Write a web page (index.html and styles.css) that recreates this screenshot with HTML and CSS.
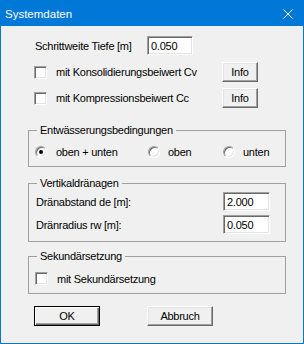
FILE: index.html
```html
<!DOCTYPE html>
<html lang="de">
<head>
    <meta charset="UTF-8">
    <title>Systemdaten</title>
    <link rel="stylesheet" href="styles.css">
</head>
<body>
    <div class="window">
        <div class="titlebar">
            <span class="title">Systemdaten</span>
            <svg class="close" width="10" height="10" viewBox="0 0 10 10">
                <path d="M0.5 0.5L9.5 9.5M9.5 0.5L0.5 9.5" stroke="#ffffff" stroke-width="1" fill="none"/>
            </svg>
        </div>

        <div class="content">
            <div class="row step-row">
                <label class="step-label">Schrittweite Tiefe [m]</label>
                <input class="field step-field" type="text" value="0.050">
            </div>

            <div class="row check-row first">
                <label class="check"><input type="checkbox"><span>mit Konsolidierungsbeiwert Cv</span></label>
                <button class="btn info">Info</button>
            </div>
            <div class="row check-row">
                <label class="check"><input type="checkbox"><span>mit Kompressionsbeiwert Cc</span></label>
                <button class="btn info">Info</button>
            </div>

            <fieldset class="group drainage">
                <legend>Entwässerungsbedingungen</legend>
                <div class="radio-row">
                    <label class="radio wide"><input type="radio" name="drain" checked><span>oben + unten</span></label>
                    <label class="radio mid"><input type="radio" name="drain"><span>oben</span></label>
                    <label class="radio"><input type="radio" name="drain"><span>unten</span></label>
                </div>
            </fieldset>

            <fieldset class="group vertical">
                <legend>Vertikaldränagen</legend>
                <div class="value-row">
                    <label>Dränabstand de [m]:</label>
                    <input class="field value-field" type="text" value="2.000">
                </div>
                <div class="value-row second">
                    <label>Dränradius rw [m]:</label>
                    <input class="field value-field" type="text" value="0.050">
                </div>
            </fieldset>

            <fieldset class="group secondary">
                <legend>Sekundärsetzung</legend>
                <label class="check"><input type="checkbox"><span>mit Sekundärsetzung</span></label>
            </fieldset>

            <div class="actions">
                <button class="btn action default">OK</button>
                <button class="btn action">Abbruch</button>
            </div>
        </div>
    </div>
</body>
</html>
```

FILE: styles.css
```css
/* Reset */
* {
    margin: 0;
    padding: 0;
    box-sizing: border-box;
}

body {
    font-family: 'Liberation Sans', Arial, sans-serif;
    font-size: 11px;
    color: #000000;
    background-color: #f0f0f0;
}

.window {
    width: 304px;
    height: 344px;
    border: 1px solid #0078d7; /* Window frame */
    background-color: #f0f0f0;
}

.titlebar {
    height: 25px;
    background-color: #0078d7;
    color: #ffffff;
    display: flex;
    align-items: center;
    justify-content: space-between;
    padding-left: 4px;
    padding-right: 10px;
}

.title {
    font-size: 11.5px;
    line-height: 14px;
    padding-top: 1px;
}

.close {
    display: block;
    margin-top: 1px;
}

.content {
    padding: 10px 17px 0 27px;
    letter-spacing: -0.25px; /* narrower dialog font */
}

.row {
    display: flex;
    align-items: center;
    padding-left: 6px;
}

.step-row {
    height: 19px;
}

.step-label {
    width: 113px;
    padding-left: 1px;
}

/* Sunken edit boxes */
.field {
    font-family: 'Liberation Sans', Arial, sans-serif;
    font-size: 11px;
    letter-spacing: -0.25px;
    color: #000000;
    height: 19px;
    padding: 0 3px;
    background-color: #ffffff;
    border: 1px solid;
    border-color: #a0a0a0 #ffffff #ffffff #a0a0a0;
    box-shadow: inset 1px 1px #696969, inset -1px -1px #e3e3e3;
    outline: none;
}

.step-field {
    width: 46px;
}

.check-row {
    height: 20px;
    margin-top: 6px;
    justify-content: space-between;
    padding-right: 28px;
}

.check-row.first {
    margin-top: 7px;
}

.check,
.radio {
    display: flex;
    align-items: center;
    height: 13px;
}

.check input,
.radio input {
    appearance: none;
    -webkit-appearance: none;
    width: 13px;
    height: 13px;
    margin-right: 9px;
    background-color: #ffffff;
    border: 1px solid;
    border-color: #a0a0a0 #ffffff #ffffff #a0a0a0;
    box-shadow: inset 1px 1px #696969, inset -1px -1px #e3e3e3;
    flex-shrink: 0;
}

.radio input {
    width: 12px;
    height: 12px;
    border-radius: 50%;
    margin-right: 9px;
    position: relative;
}

.radio input:checked::after {
    content: '';
    position: absolute;
    left: 3px;
    top: 3px;
    width: 4px;
    height: 4px;
    border-radius: 50%;
    background-color: #000000;
}

/* Raised push buttons */
.btn {
    font-family: 'Liberation Sans', Arial, sans-serif;
    font-size: 11px;
    letter-spacing: -0.25px;
    color: #000000;
    height: 20px;
    background-color: #f0f0f0;
    border: 1px solid;
    border-color: #ffffff #696969 #696969 #ffffff;
    box-shadow: inset -1px -1px #a0a0a0, inset 1px 1px #e3e3e3;
}

.info {
    width: 36px;
}

/* Group boxes */
.group {
    border: 1px solid #a0a0a0;
    padding: 0 15px 0 6px;
    min-width: 0;
}

.group legend {
    line-height: 13px;
    padding: 0 3px;
    margin-left: 2px;
}

.drainage {
    margin-top: 16px;
    padding-top: 8px;
    padding-bottom: 8px;
}

.radio-row {
    display: flex;
}

.radio.wide {
    width: 113px;
}

.radio.mid {
    width: 75px;
}

.radio.wide input {
    margin-right: 9px;
}

.radio.mid input,
.radio:last-child input {
    margin-right: 8px;
}

.vertical {
    margin-top: 10px;
    padding-top: 2px;
    padding-bottom: 7px;
}

.value-row {
    display: flex;
    align-items: center;
    justify-content: space-between;
    height: 19px;
}

.value-row label {
    padding-left: 1px;
}

.value-row.second {
    margin-top: 4px;
}

.value-field {
    width: 47px;
}

.secondary {
    margin-top: 8px;
    padding-top: 9px;
    padding-bottom: 8px;
}

.actions {
    display: flex;
    gap: 47px;
    margin-top: 12px;
    padding-left: 6px;
}

.action {
    width: 66px;
}

.action.default {
    border: 1px solid #000000;
    box-shadow: inset 1px 1px #ffffff, inset -1px -1px #696969, inset -2px -2px #a0a0a0;
}
```
